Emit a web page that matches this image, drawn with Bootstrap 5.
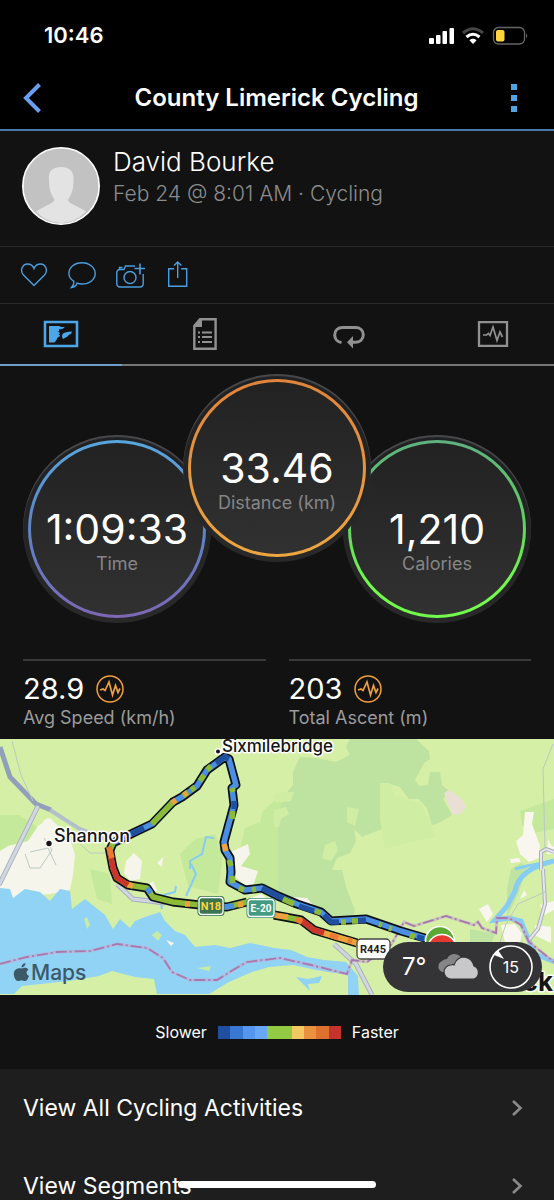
<!DOCTYPE html>
<html lang="en">
<head>
<meta charset="utf-8">
<meta name="viewport" content="width=device-width, initial-scale=1">
<title>County Limerick Cycling</title>
<link href="https://cdn.jsdelivr.net/npm/bootstrap@5.3.0/dist/css/bootstrap.min.css" rel="stylesheet">
<style>
body { background: #121212; color: #fff; font-family: Inter, "Liberation Sans", sans-serif; }
svg { display: block; }
.top-area { background: #000; border-bottom: 2px solid #467aa8; }
.status-row { height: 66px; padding: 5px 26px 0 44px; font-size: 22px; font-weight: 600; }
.title-row { height: 63px; padding: 0 24px 0 23px; }
.title-row h1 { font-size: 24px; line-height: 28px; font-weight: 600; }
.plain-btn { background: none; border: 0; padding: 0; color: #4a9fe0; }
.scroller { scrollbar-width: none; }
.scroller::-webkit-scrollbar { display: none; }
.profile { padding: 16px 22px 21px; border-bottom: 1px solid #2a2a2a; gap: 13px; }
.profile h2 { font-size: 26px; line-height: 30px; font-weight: 300; }
.profile p { font-size: 21px; line-height: 34px; font-weight: 300; color: #8c8c8c; }
.actions { padding: 13px 20px; gap: 20px; border-bottom: 1px solid #2a2a2a; }
.tabs-row { height: 62px; box-shadow: inset 0 -2px #777; }
.tab-btn { width: 22%; color: #919191; border-bottom: 2px solid transparent; }
.tab-btn.active { color: #4ba7ea; border-bottom-color: #6f9fc9; }
.gauges { padding: 8px 23px 36px; }
.gauge { flex: 0 0 188px; height: 188px; padding: 5px; margin-top: 61px; background: linear-gradient(#1f2022, #292929); box-shadow: inset 0 2px 1px #4a4a4c; }
.gauge-mid { margin: 0 -28px; z-index: 1; }
.gauge-ring { padding: 3px; }
.ring-time { background: linear-gradient(#58a6dc, #5d84c8 50%, #7d67b4); }
.ring-distance { background: linear-gradient(#e0843c, #eda640); }
.ring-calories { background: linear-gradient(#5eb17f, #62cf62 45%, #72fa4c 80%); }
.gauge-face { background: linear-gradient(#222, #313131); padding-top: 27px; }
.gauge-value { font-size: 41px; line-height: 40px; }
.caption-text { font-size: 18px; line-height: 24px; font-weight: 400; color: #858585; }
.gauge-face .caption-text { margin-top: 3px; }
.stats { padding: 0 23px 9px; gap: 23px; }
.stat { border-top: 2px solid #3a3a3a; padding-top: 11px; }
.stat-value { font-size: 29px; line-height: 34px; }
.stat .caption-text { color: #9c9c9c; }
.map-svg { width: 100%; }
.weather { right: 12px; bottom: 3px; width: 159px; height: 50px; padding: 0 9px 0 19px; background: #343436; font-size: 24px; }
.dial { width: 44px; height: 44px; }
.dial span { font-size: 16px; }
.legend { height: 74px; gap: 11px; font-size: 16px; }
.scale-bar { width: 123px; height: 13px; }
.link-row { height: 78px; padding: 0 31px 0 23px; background: #1e1e1e; color: #fff; font-size: 23px; font-weight: 400; }
.home-bar { width: 198px; height: 7px; background: #fff; bottom: 12px; left: 50%; transform: translateX(-50%); }
</style>
</head>
<body>
<div class="vh-100 d-flex flex-column overflow-hidden">
<header class="top-area flex-shrink-0">
  <div class="status-row d-flex align-items-center justify-content-between">
    <span>10:46</span>
    <svg width="99" height="20" viewBox="0 0 99 20" aria-hidden="true">
      <g fill="#fff"><rect x="0" y="12" width="5" height="6" rx="1"/><rect x="7" y="9" width="4.500" height="9" rx="1"/><rect x="13.500" y="5" width="4.500" height="13" rx="1"/><rect x="20.500" y="2" width="4.500" height="16" rx="1"/>
      <path d="M44 18l-3.600-3.800q3.600-2.900 7.200 0z"/></g>
      <path d="M34 7q10-8.500 20 0" fill="none" stroke="#444" stroke-width="3"/>
      <path d="M37.500 11q6.500-5.500 13 0" fill="none" stroke="#fff" stroke-width="3"/>
      <rect x="64.500" y="1.500" width="31" height="16.500" rx="5" fill="none" stroke="#666" stroke-width="1.300"/>
      <rect x="67" y="4" width="8.500" height="11.500" rx="2" fill="#ffd53e"/><path d="M97 7.500q2.500 2.300 0 4.600z" fill="#666"/>
    </svg>
  </div>
  <div class="title-row d-flex align-items-center justify-content-between">
    <button class="plain-btn" type="button" aria-label="Back"><svg width="30" height="30" viewBox="0 0 30 30" fill="none" stroke="#6a9ff0" stroke-width="4"><path d="M16.500 1.500L3 15l13.500 13.500"/></svg></button>
    <h1 class="m-0">County Limerick Cycling</h1>
    <button class="plain-btn d-flex justify-content-end" type="button" aria-label="More"><svg width="30" height="30" viewBox="0 0 30 30" fill="#4ea5e3"><path d="M11 1h6v6h-6zM11 12h6v6h-6zM11 23h6v6h-6z"/></svg></button>
  </div>
</header>

<main class="scroller flex-grow-1 overflow-auto">
  <section class="profile d-flex">
    <svg width="78" height="78" viewBox="0 0 78 78" class="flex-shrink-0" role="img" aria-label="Profile picture">
      <circle cx="39" cy="39" r="38.200" fill="#c2c2c2" stroke="#fff" stroke-width="1.600"/>
      <path d="M27 32c-1-8 4-12 12-12s13 4 12.500 12c0 10-1.500 15-5.500 20.500 0 4 9 6 18 12Q53 76 39 76T14 64.500c9-6 18-8 18.500-12C28 46 27 41 27 32z" fill="#e3e3e3"/>
    </svg>
    <div><h2 class="m-0">David Bourke</h2><p class="m-0">Feb 24 @ 8:01 AM · Cycling</p></div>
  </section>

  <div class="actions d-flex">
    <button class="plain-btn" type="button" aria-label="Like"><svg width="28" height="30" viewBox="0 0 28 30" fill="none" stroke="currentColor" stroke-width="1.400"><path d="M14 25.500L3.500 15C-.500 10.500 2.500 4 7.500 4c3.500 0 5.500 2 6.500 4.500C15 6 17 4 20.500 4c5 0 8 6.500 4 11z"/></svg></button>
    <button class="plain-btn" type="button" aria-label="Comment"><svg width="28" height="30" viewBox="0 0 28 30" fill="none" stroke="currentColor" stroke-width="1.400"><path d="M9 23.200c1.600.600 3.300.800 5 .800 7.500 0 13.200-4.700 13.200-10.500S21.500 2.700 14 2.700.900 7.400.900 13.500c0 3.300 1.900 5.800 5 7.800.2 2.500-.8 4.500-2.400 6.200 2.800-.5 4.800-1.800 5.500-4.300z"/></svg></button>
    <button class="plain-btn" type="button" aria-label="Add photo"><svg width="29" height="30" viewBox="0 0 29 30" fill="none" stroke="currentColor" stroke-width="1.400"><path d="M19 6H9.500L8 9.500H4A3.200 3.200 0 0 0 .800 13v10.500A3.200 3.200 0 0 0 4 27h20a3.200 3.200 0 0 0 3.200-3.500V14M3.500 9V7.500h3"/><circle cx="14" cy="17.500" r="6"/><path d="M24 3.500v11M18.500 8.500H29" stroke-width="1.600"/></svg></button>
    <button class="plain-btn" type="button" aria-label="Share"><svg width="28" height="30" viewBox="0 0 28 30" fill="none" stroke="currentColor" stroke-width="1.400"><path d="M9 8.700H3.700v17.600h18V8.700h-5.500M12.700 18V2M9 5.500L12.700 2l3.700 3.500"/></svg></button>
  </div>

  <nav class="tabs-row d-flex justify-content-between" aria-label="Activity views">
    <button class="plain-btn tab-btn active d-flex align-items-center justify-content-center" type="button" aria-label="Overview"><svg width="36" height="34" viewBox="0 0 36 34"><path d="M2 5h32v24H2z" fill="none" stroke="currentColor" stroke-width="2.600"/><path d="M6 9h10q2 1.500 6 .8-2 3-6 2.500 1 2-1.500 2.500 4 1 1 3 3 0 0 2.500-2 .5-1.500 2L11.500 25.500H6zM29 14.500l-1 2.500q-2 0-3.500 2.500L20 22q-2-3 0-5.500 3-2 9-2z" fill="currentColor"/></svg></button>
    <button class="plain-btn tab-btn d-flex align-items-center justify-content-center" type="button" aria-label="Stats"><svg width="36" height="34" viewBox="0 0 36 34"><path d="M13 2.300h15.600v29.400H7.300V9z" fill="none" stroke="currentColor" stroke-width="2.400"/><path d="M7 10V8l6-6h2v8z" fill="currentColor"/><path d="M11 15.500h2M15 15.500h10M11 20h2M15 20h10M11 25h2M15 25h10" stroke="currentColor" stroke-width="2"/></svg></button>
    <button class="plain-btn tab-btn d-flex align-items-center justify-content-center" type="button" aria-label="Laps"><svg width="36" height="34" viewBox="0 0 36 34"><path d="M10.500 25.500c-4-.500-6.800-3.500-6.800-7.500 0-4.500 3.300-7.500 7.800-7.500h13c4.500 0 7.800 3 7.800 7.300 0 4.700-3.500 7.500-8.300 7.500h-3" fill="none" stroke="currentColor" stroke-width="3"/><path d="M16 25.300l6-6.300v12.600z" fill="currentColor"/></svg></button>
    <button class="plain-btn tab-btn d-flex align-items-center justify-content-center" type="button" aria-label="Charts"><svg width="36" height="34" viewBox="0 0 36 34" fill="none" stroke="currentColor"><path d="M4 5.200h28v23.600H4z" stroke-width="2.300"/><path d="M8 18h3.500l2-1.500 1.500 2 3-8.500 4 13.500 3-8.500 2.500 5" stroke-width="1.700"/></svg></button>
  </nav>

  <section class="gauges d-flex justify-content-center text-center">
    <div class="gauge rounded-circle"><div class="gauge-ring ring-time rounded-circle h-100"><div class="gauge-face rounded-circle h-100 d-flex flex-column justify-content-center">
      <div class="gauge-value">1:09:33</div><div class="caption-text">Time</div></div></div></div>
    <div class="gauge gauge-mid rounded-circle"><div class="gauge-ring ring-distance rounded-circle h-100"><div class="gauge-face rounded-circle h-100 d-flex flex-column justify-content-center">
      <div class="gauge-value">33.46</div><div class="caption-text">Distance (km)</div></div></div></div>
    <div class="gauge rounded-circle"><div class="gauge-ring ring-calories rounded-circle h-100"><div class="gauge-face rounded-circle h-100 d-flex flex-column justify-content-center">
      <div class="gauge-value">1,210</div><div class="caption-text">Calories</div></div></div></div>
  </section>

  <section class="stats d-flex">
    <div class="stat flex-fill w-50">
      <div class="d-flex align-items-center gap-2"><span class="stat-value">28.9</span>
        <svg width="34" height="28" viewBox="-4 0 34 28" fill="none" stroke="#f0a03c" aria-hidden="true"><circle cx="14" cy="14" r="13" stroke-width="1.500"/><path d="M4 15l3-1 2 1.500 4-8.500 3.500 13 3-9.500 2.500 7 2-4" stroke-width="1.700"/></svg></div>
      <div class="caption-text">Avg Speed (km/h)</div>
    </div>
    <div class="stat flex-fill w-50">
      <div class="d-flex align-items-center gap-2"><span class="stat-value">203</span>
        <svg width="34" height="28" viewBox="-4 0 34 28" fill="none" stroke="#f0a03c" aria-hidden="true"><circle cx="14" cy="14" r="13" stroke-width="1.500"/><path d="M4 15l3-1 2 1.500 4-8.500 3.500 13 3-9.500 2.500 7 2-4" stroke-width="1.700"/></svg></div>
      <div class="caption-text">Total Ascent (m)</div>
    </div>
  </section>

  <section class="position-relative overflow-hidden">
    <svg class="map-svg" viewBox="0 0 554 256" font-family="Inter, 'Liberation Sans', sans-serif">
      <rect width="554" height="256" fill="#d5efa6"/>
      <!-- pasture and woodland -->
      <path d="M0 80l12-4 12 3 12 8 8 14-14 18-30 8zM245 89l15-6 3-11 21-19v100l-40-6-8-20zM520 72l34-12v30l-20 4-12-8zM0 76l20 0 5 14H0zM90 130l20 5 2 30-15-5zM180 115l15-15 20-5 8 20-5 40-30-8z" fill="#c5e99b"/>
      <path d="M350 0h66l13 12 1 8-6 4-9 17 4 6 9-1 2-13 10 0 2 13 7 6-6 8 9 16-13 8-7 2-5-17-8-9-10 0-9-12-10-3-9 4 3 20 2 20-12 4-12 5-8-8 2 12-6 12-13 5-5 12h10l5 20 8 20-3 15-12-2-22-10-20-4-20-9V78l5-20 10-12 0-13 7-15 16 1 20 4 14-7-4-8z" fill="#bee2a0"/>
      <path d="M380 44l10 0 4 12 12 4 14 4 10 18 5 16-20 4-30 8-5-30z" fill="#d0eda4"/>
      <path d="M347 68l12 2-4 17-8-4zM325 106l10-4 3 10-7 10-9-3zM274 71l12-3 3 7-8 5-2 8h-5zM275 54l19-1-3 9-16 2z" fill="#d0eda4"/>
      <path d="M507 150l4-20 10-6 6 4-8 25-8 17-4 8zM470 190l25 5-5 12h-20z" fill="#bfe3a0"/>
      <!-- built-up areas -->
      <path d="M0 112l8-5 20-5 10-15 12-8 10 10 9 7 6 20-2 20-3 15-20 4-25 2-15 7H0zM126 122l8-8 8 8-2 18-10 2-6-8zM157 124l6-6-1 10zM231 113l17-8 2 10-9 12 17 5-5 15-8 0-12-12zM145 148l8-6 4 9-7 6zM226 5l6 4-3 10-10-2zM43 82l5-3 8 9-8 4zM248 160l14-5 8 8-15 5zM292 158l15 1 12 14-10-2z" fill="#f6f5eb"/>
      <path d="M525 73h9l-2 12 8 22-1 12-10 4-9-8-4-13 7-6zM510 120l9-1 2 4-10 1zM548 100l3 6 3 2v7h-7zM479 170l9-5 5 10-6 8zM501 186l14-1 7 10-3 14-14-5zM520 160l4-9 3 5zM535 186l16 2v16l-15-7zM540 166l14-4v9l-10 5z" fill="#f8f6ee"/>
      <path d="M444 54l5-3 13 9 4 8-5 7-8 1-5-11z" fill="#eadfd5"/>
      <!-- estuary and rivers -->
      <path d="M0 149l10 1 3 9 12-9 15 3 10 9 10-12 10 2 2 18 13-10 10 8 10 8 8 14 7-10 10 9 5-7 10-4 15-5 5 9 10 10 10 4 10 12 20-2 15 3 20-5 24 5 17 2 16 7 17 3 22 2 12 14 1 19h-11l0-20-32-5-23-5-24 2-17 5-23 10-20 12h-52l-3-15-19-2-23-6-13 5-30 5-47 5-8 8H0z" fill="#90d3f4"/>
      <path d="M84 180l3-2 3 8-3 4zM152 196l5-4 5 4-4 6zM197 229l14-2-2 5z" fill="#c7eba5"/><path d="M166 201l8 3-3 3z" fill="#f8f6ee"/>
      <path d="M296 238l12 2 14-3-3 7-11 1 2 7z" fill="#90d3f4"/>
      <g fill="none" stroke="#86ccf3"><path d="M162 170l-2-13 15-4 1-6M186 157l10-22-5-10M190 130l0-8 12-7 4-17 8 1" stroke-width="2"/><path d="M515 130l12-3 27-5" stroke-width="3"/><path d="M554 122q-35 8-39 30l-8 15-12 14 14-2 12 3 6 15 8 18 20 8" stroke-width="5"/></g>
      <!-- roads -->
      <g fill="none"><path d="M0 8l10 30 26 27 15 6" stroke="#929fba" stroke-width="5"/><path d="M50 71l28 18 30 12" stroke="#b3bfca" stroke-width="4"/><path d="M38 67L4 136-1 146M117 145l16 15 32 4M334 205l22 20 16 31" stroke="#a7b0c2" stroke-width="5"/><path d="M38 67L4 136-1 146M117 145l16 15 32 4M334 205l22 20 16 31" stroke="#d2d6df" stroke-width="3"/><path d="M541 131l0-18 5-3 8 3M543 130l2 35-7 25-10 12" stroke="#abaebb" stroke-width="4"/><path d="M541 131l0-18 5-3 8 3M543 130l2 35-7 25-10 12" stroke="#e6e6ec" stroke-width="2"/></g>
      <g fill="none" stroke="#bcc8c3" stroke-width="1"><path d="M12 2l9 34 12 26M25 115l5 14 10 0 12-18-8-12M30 113l18-4 8 17M75 100l15 14h15M553 5l-10 25 2 80M545 153l-27 12-12 20-10 30"/></g>
      <!-- county boundary -->
      <path d="M0 225l27-7 30-5 33-1 27-7 30 4 16 10 9 14 18 8h27l16-10 14-8 33-4 31 7 36 9 5-14 15 2 24-17 13-23 10 4 32-10 28 9 4-3 4 6 14 5 1-15h12l12 7 8 17 25 20" fill="none" stroke="#c8a5cf" stroke-width="3" opacity=".6"/>
      <path d="M0 225l27-7 30-5 33-1 27-7 30 4 16 10 9 14 18 8h27l16-10 14-8 33-4 31 7 36 9 5-14 15 2 24-17 13-23 10 4 32-10 28 9 4-3 4 6 14 5 1-15h12l12 7 8 17 25 20" fill="none" stroke="#a779ad" stroke-width="1.800" stroke-dasharray="11 3 2 3"/>
      <!-- ride, coloured by speed -->
      <g fill="none" stroke-linejoin="round">
        <g stroke="#0b1118" stroke-width="9"><path d="M110 111l3-7 20-10 19-9 21-22 9-5 15-11 10-16 18-13 4 2 7 26-4 3 2 17-10 37 1 8 5 8 1 14-1 10 15 8 17-2 16 8 19 8 24 8 10 9 35-2 35 12 27 8"/><path d="M109 108l4 21 4 10 11 7 19 3 6 9 20 5 27 3 27 2 20-5M274 176l27 5 13 10 43 13"/></g>
        <g stroke-width="5.500">
          <path d="M110 111l3-7 20-10 19-9 21-22 9-5 15-11 10-16 18-13 4 2 7 26-4 3 2 17-10 37 1 8 5 8 1 14-1 10 15 8 17-2 16 8 19 8 24 8 10 9 35-2 35 12 27 8" stroke="#4b8fe2"/>
          <path d="M109 108l4 21 4 10 11 7 19 3 6 9 20 5 27 3 27 2 20-5M274 176l27 5 13 10 43 13" stroke="#8cba37"/>
          <path d="M131 95l13-6M216 24l9-6 4 2M262 149l16 8 12 6M299 167l15 5M324 176l7 7 8 0M234 62l0 8M355 182l11-1M417 198l7 2" stroke="#204f9f"/>
          <path d="M110 111l3-7M152 85l21-22M183 57l5-4M191 51l4-3M200 42l4-6M207 31l4-4M232 49l1 4M233 72l-1 8M229 121l2 6M232 137l1 7M239 149l5 2M252 151l4-1M283 160l11 5M315 172l6 2M341 183l5 0M352 182l6 0M379 185l3 1M389 189l3 1M410 196l5 2" stroke="#8cba37"/>
          <path d="M172 64l4-3M184 56l3-2M224 105l2 7M126 145l7 2M185 165l5 0M238 166l5-1M274 176l14 2M320 193l37 11" stroke="#efa13c"/>
          <path d="M109 108l4 21 4 10 11 7M301 181l13 10 10 3" stroke="#cb352b"/><path d="M109 108l3 11M296 180l6 3M330 196l8 3M348 201l4 1" stroke="#eb7b32"/>
          <path d="M147 149l4 5M223 168l11-1" stroke="#4b8fe2"/>
        </g>
      </g>
      <!-- road shields -->
      <g font-family="Roboto, 'Liberation Sans', sans-serif" font-weight="700" font-size="11" text-anchor="middle">
        <rect x="197.500" y="157" width="27" height="20" rx="4" fill="#2e6b46"/><rect x="199" y="158.500" width="24" height="17" rx="3" fill="#39764f" stroke="#fff" stroke-width="1.300"/><text x="211" y="171" fill="#ffd43d">N18</text>
        <rect x="246.500" y="159" width="29" height="20" rx="4" fill="#3c8c75"/><rect x="248" y="160.500" width="26" height="17" rx="3" fill="#439b83" stroke="#fff" stroke-width="1.300"/><text x="261" y="173" font-size="10" fill="#fff">E-20</text>
        <rect x="357" y="200" width="33" height="20" rx="4" fill="#fff" stroke="#444" stroke-width="1.300"/><text x="373" y="214" fill="#222">R445</text>
      </g>
      <circle cx="440" cy="202" r="14.500" fill="#5aa932" stroke="#fff" stroke-width="1.500"/><circle cx="442" cy="210" r="14.500" fill="#e63a31" stroke="#fff" stroke-width="1.500"/>
      <!-- place names -->
      <g fill="#151515" stroke="#fff" stroke-width="3" paint-order="stroke" stroke-linejoin="round" font-size="17" font-weight="500">
        <circle cx="49" cy="104.500" r="4" stroke="none" fill="#fff"/><circle cx="49" cy="104.500" r="2.700" stroke="none"/><circle cx="218" cy="12.500" r="3.500" stroke="none" fill="#fff"/><circle cx="218" cy="12.500" r="2" stroke="none"/>
        <text x="54" y="103" font-size="18">Shannon</text><text x="222" y="13">Sixmilebridge</text>
        <text x="553" y="252" font-size="26" font-weight="700" text-anchor="end">ck</text>
      </g>
      <g fill="#3c5968"><path d="M22 229.500c2-1.500 5-1 6.500 1-2.500 1.500-2.500 5 .5 6.500-1 3-2.500 5-4 5-1.500 0-2-.8-3.500-.8s-2 .8-3.500.8c-2.500 0-5-5-4-9 1-3.500 4.500-4.500 8-3.500zM21.500 228.500c0-2.500 1.500-4 4-4.500 0 2.500-1.500 4.300-4 4.500z"/><text x="31" y="241" font-size="21" font-weight="500">Maps</text></g>
    </svg>
    <div class="weather position-absolute rounded-pill d-flex align-items-center justify-content-between">
      <span>7°</span>
      <svg width="46" height="28" viewBox="0 0 46 28" aria-hidden="true"><path d="M7 19a6 6 0 0 1 0-11Q9 6 12 6q2-5 8-5 6 1 7 6l-6 12z" fill="#858587"/><path d="M16 26a7 7 0 0 1 0-14q2-1 3 0Q22 4 29 4q8 1 10 9a7 7 0 0 1 0 13z" fill="#c8c8ca" stroke="#343436" stroke-width="1.200"/></svg>
      <div class="dial position-relative d-flex align-items-center justify-content-center">
        <svg class="position-absolute" width="44" height="44" viewBox="0 0 44 44" fill="none"><circle cx="22" cy="22" r="21" stroke="#fff" stroke-width="1.600"/><path d="M5 10l4-5 6 9z" fill="#fff"/></svg><span>15</span>
      </div>
    </div>
  </section>

  <section class="legend d-flex align-items-center justify-content-center">
    <span>Slower</span>
    <svg class="scale-bar" viewBox="0 0 10 1" preserveAspectRatio="none" shape-rendering="crispEdges" aria-hidden="true"><path d="M0 0h1v1H0z" fill="#1f4fa3"/><path d="M1 0h1v1H1z" fill="#3878d2"/><path d="M2 0h1v1H2z" fill="#5596ef"/><path d="M3 0h1v1H3z" fill="#68a8fa"/><path d="M4 0h2v1H4z" fill="#92ca44"/><path d="M6 0h1v1H6z" fill="#f2c860"/><path d="M7 0h1v1H7z" fill="#ea9140"/><path d="M8 0h1v1H8z" fill="#dd712d"/><path d="M9 0h1v1H9z" fill="#c5332c"/></svg>
    <span>Faster</span>
  </section>

  <nav aria-label="More activities">
    <a href="#" class="link-row d-flex align-items-center justify-content-between text-decoration-none"><span>View All Cycling Activities</span><svg width="12" height="18" viewBox="0 0 12 18" fill="none" stroke="#8a8a8a" stroke-width="2.600"><path d="M2 2l7.500 7L2 16"/></svg></a>
    <a href="#" class="link-row d-flex align-items-center justify-content-between text-decoration-none"><span>View Segments</span><svg width="12" height="18" viewBox="0 0 12 18" fill="none" stroke="#8a8a8a" stroke-width="2.600"><path d="M2 2l7.500 7L2 16"/></svg></a>
  </nav>
</main>
<div class="home-bar position-fixed rounded-pill"></div>
</div>
<script src="https://cdn.jsdelivr.net/npm/bootstrap@5.3.0/dist/js/bootstrap.bundle.min.js"></script>
</body>
</html>
